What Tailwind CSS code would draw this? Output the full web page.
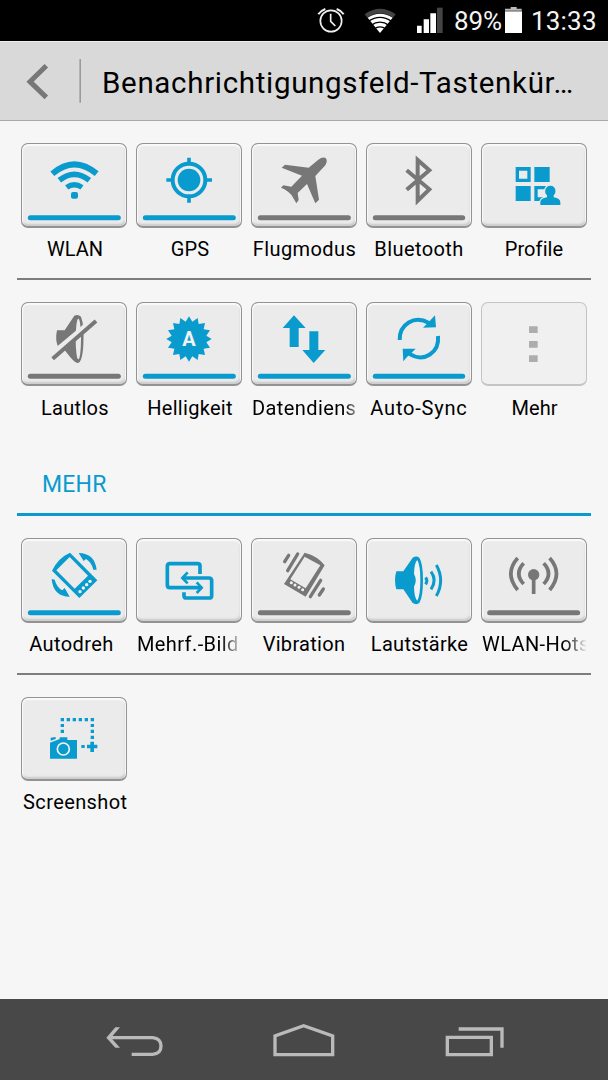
<!DOCTYPE html>
<html lang="de">
<head>
<meta charset="utf-8">
<title>Benachrichtigungsfeld</title>
<script src="https://cdn.jsdelivr.net/npm/@tailwindcss/browser@4"></script>
</head>
<body class="w-[608px] h-[1080px] overflow-hidden bg-[#f6f6f6] font-['Roboto',sans-serif] text-black flex flex-col">

<!-- Status bar -->
<header class="h-[41px] shrink-0 bg-black flex items-center justify-end text-[26px] leading-[41px] text-[#f4f4f4] pr-[9px]">
  <svg class="w-[144px] h-[41px] shrink-0" viewBox="33 0 432 123" fill="none">
    <g stroke="#f0f0f0" stroke-width="5">
      <circle cx="93" cy="63" r="32"/>
      <path d="M92 41V64L106 78" stroke-width="5"/>
      <path d="M55 43Q62 32 76 27M110 27Q124 32 131 43" stroke-width="6"/>
    </g>
    <path d="M194 43Q240 10 287 43L279 53Q240 27 202 53Z" fill="#444"/>
    <path d="M203 53Q240 29 278 53L240 99Z" fill="#fff"/>
    <path d="M205 64Q240 40 275 64M213 76Q240 57 267 76M222 87Q240 74 258 87" stroke="#000" stroke-width="4"/>
    <path d="M351 77h14v22h-14zM371 58h16v41h-16zM391 40h17v59h-17z" fill="#fff"/>
    <path d="M411 23h17v76h-17z" fill="#444"/>
  </svg>
  <span class="w-[51px] -ml-px pt-px whitespace-nowrap tracking-[-0.1px]">89%</span>
  <svg class="w-[17px] h-[41px] shrink-0" viewBox="615 0 51 123">
    <path d="M632 21h18v5h15v6h-50v-6h17z" fill="#bbb"/><path d="M615 34h51v65h-51z" fill="#fff"/>
  </svg>
  <span class="w-[67px] ml-[10px] pt-px whitespace-nowrap"><span class="-ml-px tracking-[0.2px]">13:33</span></span>
</header>

<!-- Title bar -->
<div class="h-[80px] shrink-0 bg-[#d9d9d9] border-t border-t-[#eee] border-b border-b-[#a8a8a8] flex items-center">
  <svg class="w-[82px] h-[78px] shrink-0" viewBox="0 36 246 234" fill="none">
    <path d="M139 107L90 155L139 202" stroke="#777" stroke-width="15"/>
    <path d="M240.500 87V218" stroke="#8e8e8e" stroke-width="4"/>
  </svg>
  <h1 class="ml-[20px] w-[490px] text-[29.500px] leading-[78px] whitespace-nowrap pt-[3px] tracking-[0.68px]">Benachrichtigungsfeld-Tastenkür…</h1>
</div>

<main class="h-[878px] shrink-0 flex flex-col px-[17px] pt-[22px]">
  <section class="h-[137px] border-b-2 border-[#7d7d7d] flex gap-[9px] px-[4px]">
    <div class="w-[106px]">
      <div class="h-[85px] rounded-[7px] border-[1.500px] border-[#939393] border-b-2 bg-[#ebebeb] shadow-[inset_0_1px_1px_1px_#fafafa,inset_-1px_-2px_2px_#c8c8c8]">
        <svg class="-mt-px -ml-px w-[106px] h-[84px]" viewBox="33 24 318 252" fill="none" stroke="#0a9bce">
          <path d="M127 116Q193 60 260 116" stroke-width="18"/><path d="M148 136Q193 100 238 136" stroke-width="17"/><path d="M170 157Q193 141 216 157" stroke-width="16"/>
          <rect x="183" y="171" width="21" height="20" rx="6" fill="#0a9bce" stroke="none"/>
          <path d="M61 248H325" stroke-width="15" stroke-linecap="round"/>
        </svg>
      </div>
      <p class="mt-[9px] pl-[2px] text-[20px] leading-[24px] text-center whitespace-nowrap">WLAN</p>
    </div>
    <div class="w-[106px]">
      <div class="h-[85px] rounded-[7px] border-[1.500px] border-[#939393] border-b-2 bg-[#ebebeb] shadow-[inset_0_1px_1px_1px_#fafafa,inset_-1px_-2px_2px_#c8c8c8]">
        <svg class="-mt-px -ml-px w-[106px] h-[84px]" viewBox="378 24 318 252" fill="none" stroke="#0a9bce">
          <circle cx="537" cy="135" r="49" stroke-width="12"/><circle cx="537" cy="135" r="34" fill="#0a9bce" stroke="none"/>
          <path d="M537 68v18M537 184v19M469 135h18M587 135h19" stroke-width="11"/>
          <path d="M406 248H670" stroke-width="15" stroke-linecap="round"/>
        </svg>
      </div>
      <p class="mt-[9px] pl-[2px] text-[20px] leading-[24px] text-center tracking-[0.2px] whitespace-nowrap">GPS</p>
    </div>
    <div class="w-[106px]">
      <div class="h-[85px] rounded-[7px] border-[1.500px] border-[#939393] border-b-2 bg-[#ebebeb] shadow-[inset_0_1px_1px_1px_#fafafa,inset_-1px_-2px_2px_#c8c8c8]">
        <svg class="-mt-px -ml-px w-[106px] h-[84px]" viewBox="18 24 318 252">
          <path d="M110 98L120 89L191 98L219 75Q232 65 242 69Q249 77 241 91L211 123L222 194L211 205L186 147L158 174L161 195L154 205L140 181Q130 167 108 158L115 151L139 155L171 122Z" fill="#777"/>
          <path d="M46 248H310" stroke="#777" stroke-width="15" stroke-linecap="round"/>
        </svg>
      </div>
      <p class="mt-[9px] pl-[1px] text-[20px] leading-[24px] text-center tracking-[0.4px] whitespace-nowrap">Flugmodus</p>
    </div>
    <div class="w-[106px]">
      <div class="h-[85px] rounded-[7px] border-[1.500px] border-[#939393] border-b-2 bg-[#ebebeb] shadow-[inset_0_1px_1px_1px_#fafafa,inset_-1px_-2px_2px_#c8c8c8]">
        <svg class="-mt-px -ml-px w-[106px] h-[84px]" viewBox="363 24 318 252" fill="none" stroke="#777">
          <path d="M485 106L553 163L518 197V75L553 106L485 164" stroke-width="12"/>
          <path d="M391 248H653" stroke-width="15" stroke-linecap="round"/>
        </svg>
      </div>
      <p class="mt-[9px] text-[20px] leading-[24px] text-center tracking-[0.4px] whitespace-nowrap">Bluetooth</p>
    </div>
    <div class="w-[106px]">
      <div class="h-[85px] rounded-[7px] border-[1.500px] border-[#939393] border-b-2 bg-[#ebebeb] shadow-[inset_0_1px_1px_1px_#fafafa,inset_-1px_-2px_2px_#c8c8c8]">
        <svg class="-mt-px -ml-px w-[106px] h-[84px]" viewBox="34 24 318 252" fill="#0a9bce">
          <path fill-rule="evenodd" d="M138 96h45v45h-45zM148 107v24h25v-24zM194 96h46v45h-46zM138 153h45v45h-45zM194 153h46v45h-46zM204 163v24h25v-24z"/>
          <path stroke="#ebebeb" stroke-width="7" paint-order="stroke" d="M242 152C260 152 261 174 252 181V187Q272 190 272 202V210H212V202Q212 190 232 187V181C223 174 225 152 242 152Z"/>
        </svg>
      </div>
      <p class="mt-[9px] text-[20px] leading-[24px] text-center tracking-[0.1px] whitespace-nowrap">Profile</p>
    </div>
  </section>

  <section class="h-[119px] mt-[22px] flex gap-[9px] px-[4px]">
    <div class="w-[106px]">
      <div class="h-[84px] rounded-[7px] border-[1.500px] border-[#939393] border-b-2 bg-[#ebebeb] shadow-[inset_0_1px_1px_1px_#fafafa,inset_-1px_-2px_2px_#c8c8c8]">
        <svg class="-mt-px -ml-px w-[106px] h-[84px]" viewBox="33 21 318 252">
          <path d="M141 106H164L193 62Q204 57 213 65Q223 90 220 150Q217 204 202 204Q193 204 169 172L160 160H146Q134 135 141 106Z" fill="#777"/>
          <ellipse cx="205" cy="132" rx="8" ry="61" fill="#ebebeb"/>
          <path d="M122 185L255 74" stroke="#ebebeb" stroke-width="22"/>
          <path d="M128 191L258 78" stroke="#777" stroke-width="12"/>
          <path d="M61 244H325" stroke="#777" stroke-width="15" stroke-linecap="round"/>
        </svg>
      </div>
      <p class="mt-[10px] pl-[2px] text-[20px] leading-[24px] text-center tracking-[0.3px] whitespace-nowrap">Lautlos</p>
    </div>
    <div class="w-[106px]">
      <div class="h-[84px] rounded-[7px] border-[1.500px] border-[#939393] border-b-2 bg-[#ebebeb] shadow-[inset_0_1px_1px_1px_#fafafa,inset_-1px_-2px_2px_#c8c8c8]">
        <svg class="-mt-px -ml-px w-[106px] h-[84px]" viewBox="378 21 318 252" fill="#0a9bce">
          <path d="M537 64L547 80L563 69L566 87L585 84L581 103L600 106L589 122L605 132L589 142L600 158L581 161L585 180L566 177L563 195L547 184L537 200L527 184L511 195L508 177L489 180L493 161L474 158L485 142L469 132L485 122L474 106L493 103L489 84L508 87L511 69L527 80Z"/>
          <text x="537" y="153" text-anchor="middle" font-size="60" font-weight="700" fill="#f2f2f2" font-family="Roboto, sans-serif">A</text>
          <path d="M406 244H670" stroke="#0a9bce" stroke-width="15" stroke-linecap="round"/>
        </svg>
      </div>
      <p class="mt-[10px] pl-[2px] text-[20px] leading-[24px] text-center tracking-[0.3px] whitespace-nowrap">Helligkeit</p>
    </div>
    <div class="w-[106px]">
      <div class="h-[84px] rounded-[7px] border-[1.500px] border-[#939393] border-b-2 bg-[#ebebeb] shadow-[inset_0_1px_1px_1px_#fafafa,inset_-1px_-2px_2px_#c8c8c8]">
        <svg class="-mt-px -ml-px w-[106px] h-[84px]" viewBox="18 21 318 252" fill="#0a9bce">
          <path d="M147 61L182 99H161V156H134V99H113ZM206 204L172 165H193V109H220V165H241Z"/>
          <path d="M46 244H310" stroke="#0a9bce" stroke-width="15" stroke-linecap="round"/>
        </svg>
      </div>
      <p class="mt-[10px] w-[104px] pl-[1px] overflow-hidden text-[20px] leading-[24px] tracking-[0.4px] whitespace-nowrap [mask-image:linear-gradient(to_right,#000_90%,transparent_108%)]">Datendiens</p>
    </div>
    <div class="w-[106px]">
      <div class="h-[84px] rounded-[7px] border-[1.500px] border-[#939393] border-b-2 bg-[#ebebeb] shadow-[inset_0_1px_1px_1px_#fafafa,inset_-1px_-2px_2px_#c8c8c8]">
        <svg class="-mt-px -ml-px w-[106px] h-[84px]" viewBox="363 21 318 252" fill="none" stroke="#0a9bce">
          <path d="M464 135C463 88 508 59 552 84M579 123C584 171 538 205 492 176" stroke-width="12"/>
          <path d="M570 61L573 97L534 98L546 86L556 76ZM473 161H512L500 173L486 186L475 199Z" fill="#0a9bce" stroke="none"/>
          <path d="M391 244H653" stroke-width="15" stroke-linecap="round"/>
        </svg>
      </div>
      <p class="mt-[10px] text-[20px] leading-[24px] text-center tracking-[0.8px] whitespace-nowrap">Auto-Sync</p>
    </div>
    <div class="w-[106px]">
      <div class="h-[84px] rounded-[7px] border-[1.500px] border-[#c4c4c4] border-b-2 bg-[#f0f0f0]">
        <svg class="-mt-px -ml-px w-[106px] h-[84px]" viewBox="34 501 318 252" fill="#adadad">
          <path d="M178 574h26v20h-26zM178 618h26v20h-26zM178 661h26v20h-26z"/>
        </svg>
      </div>
      <p class="mt-[10px] pl-[1px] text-[20px] leading-[24px] text-center whitespace-nowrap">Mehr</p>
    </div>
  </section>

  <h2 class="h-[95px] border-b-[3px] border-[#0a9bce] pl-[25px] pt-[50px] text-[23px] leading-[28px] tracking-[0.2px] text-[#0a9bce]">MEHR</h2>

  <section class="h-[137px] mt-[22px] border-b-2 border-[#7d7d7d] flex gap-[9px] px-[4px]">
    <div class="w-[106px]">
      <div class="h-[85px] rounded-[7px] border-[1.500px] border-[#939393] border-b-2 bg-[#ebebeb] shadow-[inset_0_1px_1px_1px_#fafafa,inset_-1px_-2px_2px_#c8c8c8]">
        <svg class="-mt-px -ml-px w-[106px] h-[84px]" viewBox="33 24 318 252" fill="#0a9bce">
          <path fill-rule="evenodd" d="M126 122Q144 84 180 68L262 151L208 204ZM139 121L194 176L234 137L179 81Z"/>
          <g fill="#f2f2f2"><circle cx="210" cy="185" r="5"/><circle cx="220" cy="174" r="5"/><circle cx="230" cy="164" r="5"/><circle cx="240" cy="154" r="5"/></g>
          <path d="M206 69Q254 70 260 119H250Q245 97 228 87L221 93ZM179 200Q130 200 125 147L134 149Q140 172 157 181L164 174Z"/>
          <path d="M61 248H325" stroke="#0a9bce" stroke-width="15" stroke-linecap="round"/>
        </svg>
      </div>
      <p class="mt-[9px] -ml-[5px] text-[20px] leading-[24px] text-center tracking-[0.4px] whitespace-nowrap">Autodreh</p>
    </div>
    <div class="w-[106px]">
      <div class="h-[85px] rounded-[7px] border-[1.500px] border-[#939393] border-b-2 bg-[#ebebeb] shadow-[inset_0_1px_1px_1px_#fafafa,inset_-1px_-2px_2px_#c8c8c8]">
        <svg class="-mt-px -ml-px w-[106px] h-[84px]" viewBox="378 24 318 252" fill="none" stroke="#0a9bce" stroke-width="11">
          <path d="M570 132V108Q570 101 563 101H480Q472 101 472 109V165Q472 173 480 173H573"/>
          <path d="M518 144H597Q605 144 605 152V197Q605 204 597 204H530Q522 204 522 197V187"/>
          <path d="M533 127L517 144L533 160M560 157L575 173L560 189" stroke-width="8"/>
        </svg>
      </div>
      <p class="mt-[9px] w-[104px] pl-[1px] overflow-hidden text-[20px] leading-[24px] tracking-[0.4px] whitespace-nowrap [mask-image:linear-gradient(to_right,#000_82%,transparent_103%)]">Mehrf.-Bilds</p>
    </div>
    <div class="w-[106px]">
      <div class="h-[85px] rounded-[7px] border-[1.500px] border-[#939393] border-b-2 bg-[#ebebeb] shadow-[inset_0_1px_1px_1px_#fafafa,inset_-1px_-2px_2px_#c8c8c8]">
        <svg class="-mt-px -ml-px w-[106px] h-[84px]" viewBox="18 24 318 252" fill="#777">
          <path fill-rule="evenodd" d="M179 68Q218 78 239 106L182 200L117 162ZM179 80L136 148L182 175L226 106Z"/>
          <g fill="#f2f2f2"><circle cx="139" cy="158" r="4.500"/><circle cx="150" cy="165" r="4.500"/><circle cx="162" cy="172" r="4.500"/><circle cx="173" cy="179" r="4.500"/></g>
          <path d="M158 72L128 122M131 76L119 95M227 151L196 200M235 177L223 195" stroke="#777" stroke-width="10" stroke-linecap="round"/>
          <path d="M46 248H310" stroke="#777" stroke-width="15" stroke-linecap="round"/>
        </svg>
      </div>
      <p class="mt-[9px] text-[20px] leading-[24px] text-center tracking-[0.3px] whitespace-nowrap">Vibration</p>
    </div>
    <div class="w-[106px]">
      <div class="h-[85px] rounded-[7px] border-[1.500px] border-[#939393] border-b-2 bg-[#ebebeb] shadow-[inset_0_1px_1px_1px_#fafafa,inset_-1px_-2px_2px_#c8c8c8]">
        <svg class="-mt-px -ml-px w-[106px] h-[84px]" viewBox="363 24 318 252" fill="#0a9bce">
          <path d="M454 124H475L503 83Q514 76 523 83Q534 100 534 151Q534 202 523 219Q514 226 503 219L475 178H454Q446 151 454 124Z"/>
          <path d="M517 90Q508 98 507 132Q518 151 507 170Q508 204 517 212Q526 196 526 151Q526 106 517 90Z" fill="#f2f2f2"/>
          <path d="M542 142Q549 152 542 163M558 125Q577 151 558 178M574 105Q600 151 574 198" fill="none" stroke="#0a9bce" stroke-width="9"/>
        </svg>
      </div>
      <p class="mt-[9px] pl-[1px] text-[20px] leading-[24px] text-center tracking-[0.3px] whitespace-nowrap">Lautstärke</p>
    </div>
    <div class="w-[106px]">
      <div class="h-[85px] rounded-[7px] border-[1.500px] border-[#939393] border-b-2 bg-[#ebebeb] shadow-[inset_0_1px_1px_1px_#fafafa,inset_-1px_-2px_2px_#c8c8c8]">
        <svg class="-mt-px -ml-px w-[106px] h-[84px]" viewBox="33 24 318 252" fill="none" stroke="#777">
          <circle cx="191" cy="134" r="17" fill="#777" stroke="none"/><path d="M191 140V192" stroke-width="11"/>
          <path d="M161 100Q132 131 161 162M143 84Q102 131 143 180M221 100Q250 131 221 162M239 84Q280 131 239 180" stroke-width="11"/>
          <path d="M59 248H323" stroke-width="15" stroke-linecap="round"/>
        </svg>
      </div>
      <p class="mt-[9px] pl-px w-[105px] overflow-hidden text-[20px] leading-[24px] tracking-[0.4px] whitespace-nowrap [mask-image:linear-gradient(to_right,#000_80%,transparent_101%)]">WLAN-Hots</p>
    </div>
  </section>

  <section class="mt-[22px] flex px-[4px]">
    <div class="w-[106px]">
      <div class="h-[84px] rounded-[7px] border-[1.500px] border-[#939393] border-b-2 bg-[#ebebeb] shadow-[inset_0_1px_1px_1px_#fafafa,inset_-1px_-2px_2px_#c8c8c8]">
        <svg class="-mt-px -ml-px w-[106px] h-[84px]" viewBox="33 36 318 252" fill="#0a9bce">
          <path d="M152 99h10v10h-10zM170 99h10v10h-10zM188 99h10v10h-10zM206 99h10v10h-10zM224 99h10v10h-10zM242 99h10v10h-10zM152 117h10v9h-10zM152 134h10v10h-10zM242 117h10v9h-10zM242 134h10v10h-10zM242 152h10v10h-10zM214 180h10v9h-10zM241 170h11v9h10v11h-10v11h-11v-11h-10v-11h10z"/>
          <path d="M120 173L149 162V157H172V165H201V221H120ZM122 158L137 156V162L122 167Z"/>
          <circle cx="160" cy="192" r="18" fill="none" stroke="#f4f4f4" stroke-width="5"/>
        </svg>
      </div>
      <p class="mt-[9px] pl-[2px] text-[20px] leading-[24px] text-center tracking-[0.4px] whitespace-nowrap">Screenshot</p>
    </div>
  </section>
</main>

<!-- Navigation bar -->
<nav class="h-[81px] shrink-0 bg-[#484849] flex pl-[80px]">
  <svg class="w-[460px] h-[81px]" viewBox="1 28 1380 243" fill="none" stroke="#bababa" stroke-width="10">
    <path d="M92 144H219Q244 147 244 169Q244 192 219 194H156"/>
    <path d="M80 144L107 113H121L94 144L121 174H107Z" fill="#bababa" stroke="none"/>
    <path d="M586 195V139L672 108L759 139V195Z"/>
    <path d="M1103 143H1235V195H1103ZM1137 118H1267V174"/>
  </svg>
</nav>
</body>
</html>
